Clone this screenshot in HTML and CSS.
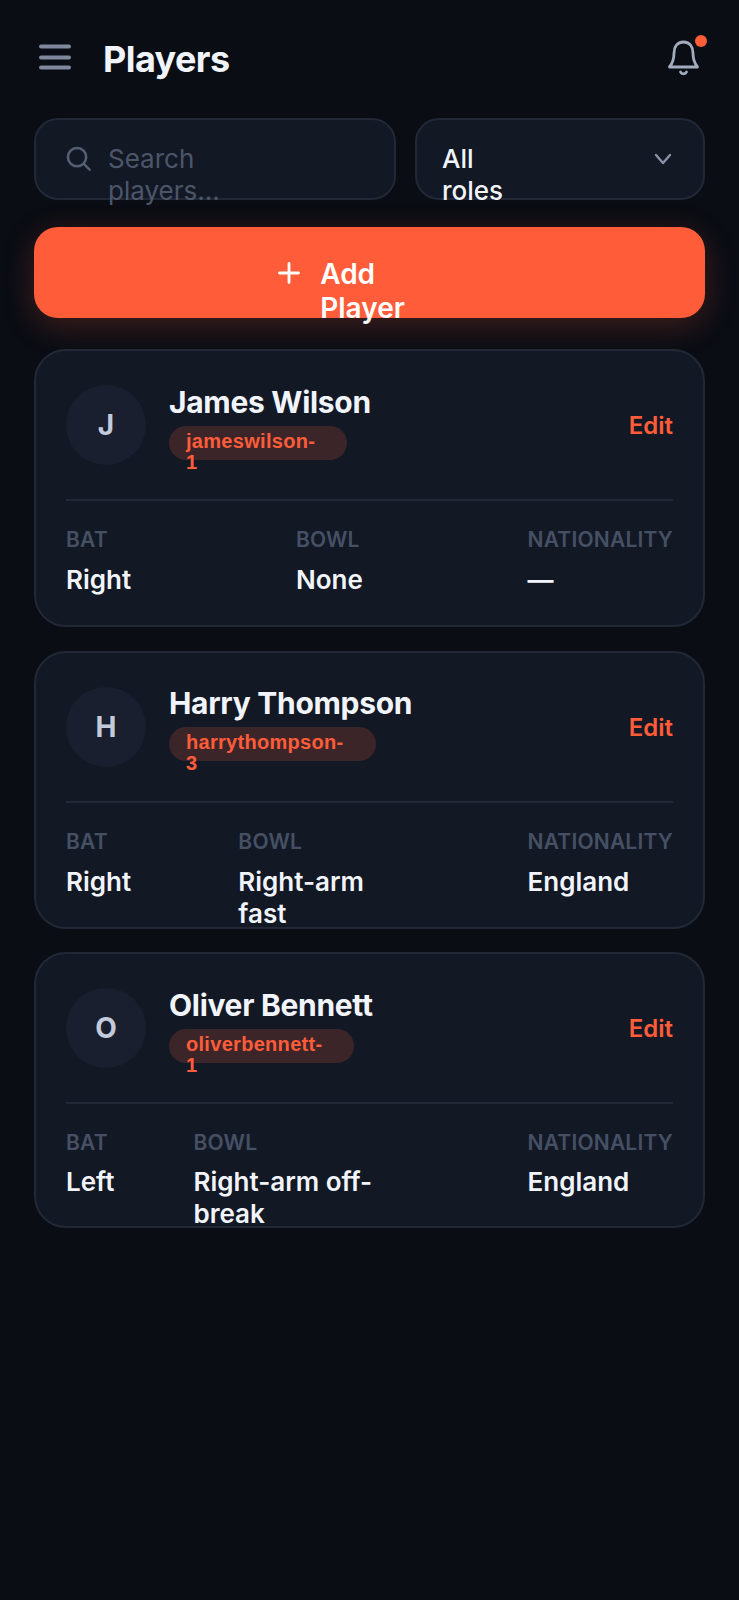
FILE: index.html
```html
<!DOCTYPE html>
<html lang="en">
<head>
    <meta charset="UTF-8">
    <meta name="viewport" content="width=device-width, initial-scale=1.0">
    <title>Players</title>
    <link rel="stylesheet" href="styles.css">
</head>
<body>
    <div class="page">

        <!-- Top bar -->
        <header class="topbar">
            <svg class="menu-icon" width="32" height="26" viewBox="0 0 32 26" fill="none" stroke="#7f889c" stroke-width="4" stroke-linecap="round">
                <path d="M2 2.500h28M2 13.500h28M2 23.500h28"/>
            </svg>
            <h1 class="title">Players</h1>
            <div class="bell">
                <svg width="34" height="36" viewBox="0 0 34 36" fill="none" stroke="#a3acbd" stroke-width="2.800" stroke-linecap="round" stroke-linejoin="round">
                    <path d="M15.500 2C9 2 6 7 6 13c0 7-2 11-4.500 14h28C27 24 25 20 25 13c0-6-3-11-9.500-11z"/>
                    <path d="M12.500 32c1 2.400 5 2.400 6 0"/>
                </svg>
                <span class="bell-dot"></span>
            </div>
        </header>

        <!-- Search and role filter -->
        <div class="filters">
            <div class="field search">
                <svg width="25" height="25" viewBox="0 0 26 26" fill="none" stroke="#566074" stroke-width="2.6" stroke-linecap="round">
                    <circle cx="11.500" cy="11.500" r="9.500"/>
                    <path d="M18.500 18.500l6 6"/>
                </svg>
                <span class="wrap-text placeholder">Search players...</span>
            </div>
            <div class="field roles">
                <span class="wrap-text">All roles</span>
                <svg width="18" height="12" viewBox="0 0 18 12" fill="none" stroke="#8a93a6" stroke-width="2.4" stroke-linecap="round" stroke-linejoin="round">
                    <path d="M2 2l7 8 7-8"/>
                </svg>
            </div>
        </div>

        <button class="add-btn">
            <svg width="22" height="22" viewBox="0 0 22 22" fill="none" stroke="#fff" stroke-width="2.800" stroke-linecap="round">
                <path d="M11 1.500v19M1.500 11h19"/>
            </svg>
            <span class="wrap-text btn-label">Add Player</span>
        </button>

        <!-- Player cards -->
        <div class="card">
            <div class="card-head">
                <div class="avatar">J</div>
                <div class="info">
                    <div class="name">James Wilson</div>
                    <div class="tag"><span class="tag-text">jameswilson-1</span></div>
                </div>
                <a class="edit">Edit</a>
            </div>
            <div class="stats">
                <div class="stat">
                    <div class="stat-label">BAT</div>
                    <div class="stat-value">Right</div>
                </div>
                <div class="stat">
                    <div class="stat-label">BOWL</div>
                    <div class="stat-value">None</div>
                </div>
                <div class="stat">
                    <div class="stat-label">NATIONALITY</div>
                    <div class="stat-value">—</div>
                </div>
            </div>
        </div>

        <div class="card">
            <div class="card-head">
                <div class="avatar">H</div>
                <div class="info">
                    <div class="name">Harry Thompson</div>
                    <div class="tag"><span class="tag-text">harrythompson-3</span></div>
                </div>
                <a class="edit">Edit</a>
            </div>
            <div class="stats">
                <div class="stat">
                    <div class="stat-label">BAT</div>
                    <div class="stat-value">Right</div>
                </div>
                <div class="stat bowl-mid">
                    <div class="stat-label">BOWL</div>
                    <div class="stat-value">Right-arm fast</div>
                </div>
                <div class="stat">
                    <div class="stat-label">NATIONALITY</div>
                    <div class="stat-value">England</div>
                </div>
            </div>
        </div>

        <div class="card card-short">
            <div class="card-head">
                <div class="avatar">O</div>
                <div class="info">
                    <div class="name">Oliver Bennett</div>
                    <div class="tag"><span class="tag-text">oliverbennett-1</span></div>
                </div>
                <a class="edit">Edit</a>
            </div>
            <div class="stats">
                <div class="stat">
                    <div class="stat-label">BAT</div>
                    <div class="stat-value">Left</div>
                </div>
                <div class="stat bowl-long">
                    <div class="stat-label">BOWL</div>
                    <div class="stat-value">Right-arm off-break</div>
                </div>
                <div class="stat">
                    <div class="stat-label">NATIONALITY</div>
                    <div class="stat-value">England</div>
                </div>
            </div>
        </div>

    </div>
</body>
</html>
```

FILE: styles.css
```css
* {
    box-sizing: border-box;
}
body {
    margin: 0;
    min-height: 1600px;
    background-color: #0a0d14;
    font-family: Inter, "Liberation Sans", sans-serif;
    color: #f1f4fa;
}
.page {
    padding: 39px 34px 0;
}
.topbar {
    display: flex;
    align-items: center;
    height: 38px;
    margin-bottom: 40.5px;
    padding-left: 5px;
}
.menu-icon {
    margin-top: -3px;
}
.title {
    flex: 1;
    margin: 2px 0 0 32px;
    font-size: 36px;
    font-weight: 700;
    letter-spacing: -0.6px;
}
.bell {
    position: relative;
    width: 34px;
    height: 36px;
    margin-right: 3px;
}
.bell-dot {
    position: absolute;
    top: -5px;
    right: -5px;
    width: 12px;
    height: 12px;
    border-radius: 50%;
    background-color: #ff5c39;
}
.filters {
    display: flex;
    gap: 19px;
    margin-bottom: 27px;
}
.field {
    display: flex;
    align-items: center;
    height: 82.5px;
    background-color: #131825;
    border: 2px solid #222835;
    border-radius: 24px;
    font-size: 26px;
    line-height: 32px;
}
.search {
    width: 362px;
    gap: 17px;
    padding-left: 30px;
}
.roles {
    flex: 1;
    justify-content: space-between;
    padding: 0 31px 0 25px;
    font-weight: 500;
}
/* one line tall on purpose, the second line runs out of the box */
.wrap-text {
    width: min-content;
    height: 32px;
}
.placeholder {
    color: #4d5669;
}
.add-btn {
    display: flex;
    align-items: center;
    justify-content: center;
    gap: 20px;
    width: 100%;
    height: 91px;
    margin-bottom: 31px;
    padding: 0 56px 0 0;
    border: none;
    border-radius: 24px;
    background-color: #ff5c39;
    box-shadow: 0 8px 32px rgba(255, 92, 57, 0.22);
    color: #fff;
    font-family: inherit;
    font-size: 28px;
    font-weight: 600;
    line-height: 34px;
    text-align: left;
}
.btn-label {
    height: 34px;
    margin-top: 2px;
}
.card {
    height: 278px;
    margin-bottom: 23.5px;
    padding: 35px 30px 0;
    background-color: #131825;
    border: 2px solid #222835;
    border-radius: 32px;
}
.card-short {
    height: 275.5px;
}
.card-head {
    display: flex;
    align-items: center;
    gap: 23px;
    height: 115px;
    padding-bottom: 35px;
    border-bottom: 2px solid #222835;
}
.avatar {
    display: flex;
    flex: none;
    align-items: center;
    justify-content: center;
    width: 80px;
    height: 80px;
    border-radius: 50%;
    background-color: #191f2e;
    color: #c3cada;
    font-size: 28px;
    font-weight: 700;
}
.info {
    flex: 1;
    margin-top: 6px;
}
.name {
    margin-bottom: 6px;
    font-size: 30px;
    font-weight: 700;
    line-height: 36px;
    letter-spacing: -0.3px;
}
.tag {
    display: inline-block;
    height: 34px;
    padding: 0 32px 0 17px;
    border-radius: 17px;
    background-color: #3c2529;
}
.tag-text {
    display: block;
    width: min-content;
    padding-top: 5px;
    color: #ff5c39;
    font-family: "Liberation Sans", sans-serif;
    font-size: 20px;
    font-weight: 700;
    line-height: 21px;
    letter-spacing: 0.3px;
}
.edit {
    margin-top: 1px;
    color: #ff5c39;
    font-size: 24px;
    font-weight: 600;
}
.stats {
    display: flex;
    justify-content: space-between;
    padding-top: 25px;
}
.stat-label {
    margin-bottom: 10px;
    color: #465064;
    font-size: 21px;
    font-weight: 600;
    line-height: 28px;
    letter-spacing: 0.2px;
}
.card-short .stat-label {
    margin-bottom: 9px;
}
.stat-value {
    font-size: 26px;
    font-weight: 600;
    line-height: 32px;
}
/* these two columns keep their one-line width while the value wraps */
.bowl-mid {
    width: 182px;
}
.bowl-mid .stat-value {
    width: 150px;
}
.bowl-long {
    width: 255px;
}
.bowl-long .stat-value {
    width: 195px;
}
```
